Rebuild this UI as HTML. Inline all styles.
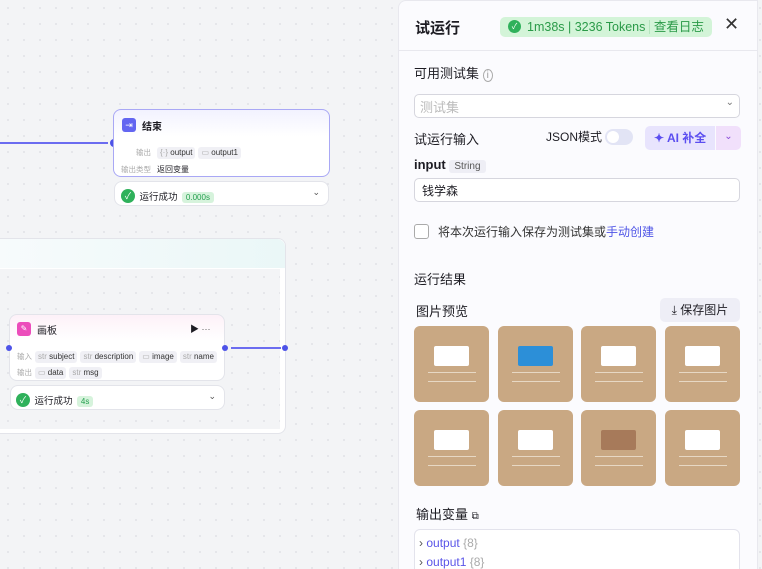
<!DOCTYPE html>
<html style="overflow:hidden;height:569px"><head><meta charset="utf-8"><style>
*{box-sizing:border-box;margin:0;padding:0}
body{width:762px;height:569px;overflow:hidden;position:relative;background:#f3f4f6;background-image:radial-gradient(#e0e1e6 0.8px,transparent 1px);background-size:16px 16px;font-family:"Liberation Sans","Noto Sans CJK SC",sans-serif;color:#1d1c23}
.abs{position:absolute}
.node{position:absolute;background:#fff;border:1px solid #e3e4ea;border-radius:8px}
.tag{display:inline-block;background:#f0f0f5;border-radius:3px;padding:0 3px;font-size:8px;color:#333;margin-right:3px;line-height:12px}
.tag i{color:#aaa;font-style:normal}
.lbl{color:#aaa;font-size:7.5px;margin-right:6px}
.ok{display:inline-block;width:14px;height:14px;border-radius:50%;background:#2fb15b;color:#fff;font-size:9px;text-align:center;line-height:14px;vertical-align:middle}
.g{background:#d6f3dc;color:#26a050;font-size:8px;padding:1px 4px;border-radius:3px}
.panel{position:absolute;left:398px;top:0;width:360px;height:569px;background:#fbfbfe;border-radius:8px 0 0 0;border:1px solid #e8e8ee;border-bottom:none;overflow:hidden}
.img{position:absolute;width:75px;height:76px;border-radius:6px;background:#c9a883}
.img b{position:absolute;left:20px;top:20px;width:35px;height:20px;background:#fff;border-radius:2px}
.img s{position:absolute;left:14px;top:46px;width:48px;height:10px;border-top:1px solid #e7d8c4;border-bottom:1px solid #e7d8c4}
</style></head><body>
<div class="abs" style="left:0;top:142px;width:108px;height:1.5px;background:#6b6cf0"></div>
<div class="abs" style="left:110px;top:139px;width:8px;height:8px;border-radius:50%;background:#4d53e8"></div>
<div class="node" style="left:113px;top:109px;width:217px;height:68px;border-color:#a9a8f5;background:linear-gradient(#f2f2ff,#fff 40%)">
 <div class="abs" style="left:8px;top:8px;width:14px;height:14px;border-radius:3px;background:#6366f1;color:#fff;font-size:9px;text-align:center;line-height:14px">⇥</div>
 <div class="abs" style="left:28px;top:8px;font-size:10px;font-weight:bold">结束</div>
 <div class="abs" style="left:22px;top:32px"><span class="lbl">输出</span><span class="tag"><i>{·}</i> output</span><span class="tag"><i>▭</i> output1</span></div>
 <div class="abs" style="left:7px;top:49px"><span class="lbl">输出类型</span><span style="font-size:8px">返回变量</span></div>
</div>
<div class="node" style="left:114px;top:181px;width:215px;height:25px">
 <div class="abs" style="left:6px;top:5px"><span class="ok">✓</span> <span style="font-size:9.5px;vertical-align:middle">运行成功</span> <span class="g">0.000s</span></div>
 <div class="abs" style="right:8px;top:5px;font-size:9px;color:#555">⌄</div>
</div>
<div class="abs" style="left:0;top:238px;width:286px;height:196px;background:#fff;border:1px solid #e3e4ea;border-radius:0 8px 8px 0;border-left:none">
 <div class="abs" style="left:0;top:0;width:285px;height:29px;background:linear-gradient(90deg,#f7fbfc,#eaf7f7);border-radius:0 8px 0 0"></div>
 <div class="abs" style="left:0;top:30px;width:280px;height:160px;background:#f3f4f6;background-image:radial-gradient(#e0e1e6 0.8px,transparent 1px);background-size:16px 16px"></div>
</div>
<div class="node" style="left:9px;top:314px;width:216px;height:67px;background:linear-gradient(#fdf1f8,#fff 40%)">
 <div class="abs" style="left:7px;top:7px;width:14px;height:14px;border-radius:3px;background:#ec4dbb;color:#fff;font-size:8px;text-align:center;line-height:14px">✎</div>
 <div class="abs" style="left:27px;top:7px;font-size:10px">画板</div>
 <div class="abs" style="left:180px;top:7px;font-size:9px">▶ <span style="color:#555">···</span></div>
 <div class="abs" style="left:7px;top:31px;white-space:nowrap"><span class="lbl" style="margin-right:3px">输入</span><span class="tag"><i>str</i> subject</span><span class="tag"><i>str</i> description</span><span class="tag"><i>▭</i> image</span><span class="tag"><i>str</i> name</span></div>
 <div class="abs" style="left:7px;top:47px"><span class="lbl" style="margin-right:3px">输出</span><span class="tag"><i>▭</i> data</span><span class="tag"><i>str</i> msg</span></div>
</div>
<div class="abs" style="left:222px;top:345px;width:6px;height:6px;border-radius:50%;background:#4d53e8"></div>
<div class="abs" style="left:231px;top:347px;width:50px;height:1.5px;background:#6b6cf0"></div>
<div class="abs" style="left:282px;top:345px;width:6px;height:6px;border-radius:50%;background:#4d53e8"></div>
<div class="abs" style="left:6px;top:345px;width:6px;height:6px;border-radius:50%;background:#4d53e8"></div>
<div class="node" style="left:10px;top:385px;width:215px;height:25px">
 <div class="abs" style="left:5px;top:5px"><span class="ok">✓</span> <span style="font-size:9.5px;vertical-align:middle">运行成功</span> <span class="g">4s</span></div>
 <div class="abs" style="right:8px;top:5px;font-size:9px;color:#555">⌄</div>
</div>
<div class="panel">
 <div class="abs" style="left:16px;top:16px;font-size:15px;font-weight:bold">试运行</div>
 <div class="abs" style="left:101px;top:16px;width:212px;height:20px;background:#d3f4d8;border-radius:5px;font-size:12.5px;color:#2a9a48;line-height:20px;white-space:nowrap">
  <span class="ok" style="margin:-2px 6px 0 8px;width:13px;height:13px;line-height:13px;font-size:8px">✓</span>1m38s | 3236 Tokens <span style="border-left:1px solid #b6e5bf;padding-left:4px">查看日志</span></div>
 <div class="abs" style="left:325px;top:13px;font-size:18px;color:#333">✕</div>
 <div class="abs" style="left:0;top:49px;width:360px;height:1px;background:#e8e8ee"></div>
 <div class="abs" style="left:15px;top:62px;font-size:13px">可用测试集 <span style="font-size:10px;color:#999;border:1px solid #aaa;border-radius:50%;padding:0 3px">i</span></div>
 <div class="abs" style="left:15px;top:93px;width:326px;height:24px;border:1px solid #d6d6de;border-radius:5px;background:#fff;font-size:13px;color:#bbb;padding:2px 5px">测试集<span style="float:right;color:#777;font-size:10px">⌄</span></div>
 <div class="abs" style="left:15px;top:128px;font-size:13px">试运行输入</div>
 <div class="abs" style="left:147px;top:127px;font-size:12px">JSON模式</div>
 <div class="abs" style="left:206px;top:128px;width:28px;height:16px;border-radius:8px;background:#e2e4f5"><div style="margin:2px;width:12px;height:12px;border-radius:50%;background:#fff"></div></div>
 <div class="abs" style="left:246px;top:125px;width:70px;height:24px;background:#e8e4fd;border-radius:5px 0 0 5px;font-size:12px;font-weight:bold;color:#5b4ef0;line-height:24px;padding-left:9px">✦ AI 补全</div>
 <div class="abs" style="left:317px;top:125px;width:25px;height:24px;background:#f1e0fb;border-radius:0 5px 5px 0;color:#8a4ad9;text-align:center;font-size:10px;line-height:22px">⌄</div>
 <div class="abs" style="left:15px;top:156px;font-size:13px;font-weight:bold">input <span style="font-weight:normal;font-size:10px;background:#eeeef5;border-radius:3px;padding:1px 5px;color:#555">String</span></div>
 <div class="abs" style="left:15px;top:177px;width:326px;height:24px;border:1px solid #d6d6de;border-radius:5px;background:#fff;font-size:12px;padding:3px 7px">钱学森</div>
 <div class="abs" style="left:15px;top:223px;width:15px;height:15px;border:1px solid #aaa;border-radius:3px;background:#fff"></div>
 <div class="abs" style="left:39px;top:222px;font-size:12px;color:#333">将本次运行输入保存为测试集或<span style="color:#4f55e6">手动创建</span></div>
 <div class="abs" style="left:15px;top:268px;font-size:13px">运行结果</div>
 <div class="abs" style="left:17px;top:300px;font-size:13px">图片预览</div>
 <div class="abs" style="left:261px;top:297px;width:80px;height:24px;background:#eeeef6;border-radius:5px;font-size:12px;line-height:24px;text-align:center">⤓ 保存图片</div>
 <div class="img" style="left:15px;top:325px"><b></b><s></s></div>
 <div class="img" style="left:99px;top:325px"><b style="background:#2c8fd8"></b><s></s></div>
 <div class="img" style="left:182px;top:325px"><b></b><s></s></div>
 <div class="img" style="left:266px;top:325px"><b></b><s></s></div>
 <div class="img" style="left:15px;top:409px"><b></b><s></s></div>
 <div class="img" style="left:99px;top:409px"><b></b><s></s></div>
 <div class="img" style="left:182px;top:409px"><b style="background:#a77a5a"></b><s></s></div>
 <div class="img" style="left:266px;top:409px"><b></b><s></s></div>
 <div class="abs" style="left:17px;top:503px;font-size:13px">输出变量 <span style="font-size:10px">⧉</span></div>
 <div class="abs" style="left:15px;top:528px;width:326px;height:50px;border:1px solid #e3e3ec;border-radius:6px;background:#fff;font-size:12px;padding:4px 4px;line-height:19px">
  <div><span style="color:#555">›</span> <span style="color:#5a55e8">output</span> <span style="color:#aaa">{8}</span></div>
  <div><span style="color:#555">›</span> <span style="color:#5a55e8">output1</span> <span style="color:#aaa">{8}</span></div>
 </div>
</div>
</body></html>
